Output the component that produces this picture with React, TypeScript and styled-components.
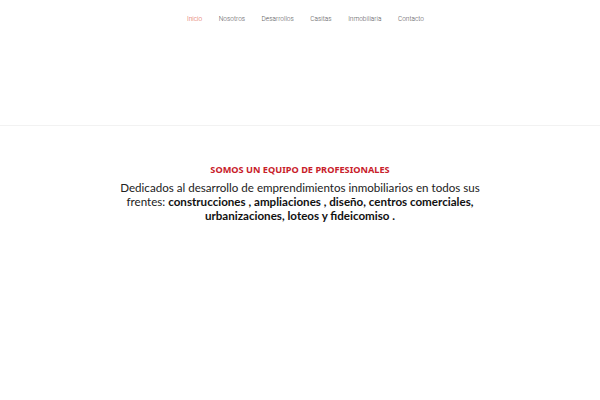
import React from "react";
import styled, { createGlobalStyle } from "styled-components";

const Global = createGlobalStyle`
  html, body { margin: 0; padding: 0; background: #fff; }
  body { font-family: Lato, "Noto Sans", sans-serif; }
`;

const Header = styled.header`
  height: 125px;
  border-bottom: 1px solid #f2f2f2;
  display: flex;
  justify-content: center;
  align-items: flex-start;
`;

const Nav = styled.nav`
  display: flex;
  gap: 16.5px;
  padding-top: 14px;
  padding-left: 11px;
`;

const NavLink = styled.a<{ $active?: boolean }>`
  font-family: Roboto, sans-serif;
  font-weight: 300;
  font-size: 6.5px;
  line-height: 10px;
  color: ${(p) => (p.$active ? "#e05a4a" : "#555")};
  text-decoration: none;
`;

const Section = styled.section`
  display: flex;
  flex-direction: column;
  align-items: center;
  padding-top: 38px;
  text-align: center;
`;

const Title = styled.h2`
  margin: 0;
  font-family: "Noto Sans", sans-serif;
  font-size: 9.2px;
  font-weight: 700;
  color: #c8202a;
  line-height: 12px;
`;

const Body = styled.p`
  margin: 5px 0 0;
  width: 364px;
  font-size: 11.6px;
  line-height: 14px;
  color: #222;
`;

const Strong = styled.b`
  font-weight: 700;
  color: #111;
`;

const items = ["Inicio", "Nosotros", "Desarrollos", "Casitas", "Inmobiliaria", "Contacto"];

export default function App() {
  return (
    <>
      <Global />
      <Header>
        <Nav>
          {items.map((t, i) => (
            <NavLink key={t} href="#" $active={i === 0}>
              {t}
            </NavLink>
          ))}
        </Nav>
      </Header>
      <Section>
        <Title>SOMOS UN EQUIPO DE PROFESIONALES</Title>
        <Body>
          Dedicados al desarrollo de emprendimientos inmobiliarios en todos sus frentes:{" "}
          <Strong>
            construcciones , ampliaciones , diseño, centros comerciales, urbanizaciones, loteos y fideicomiso .
          </Strong>
        </Body>
      </Section>
    </>
  );
}
